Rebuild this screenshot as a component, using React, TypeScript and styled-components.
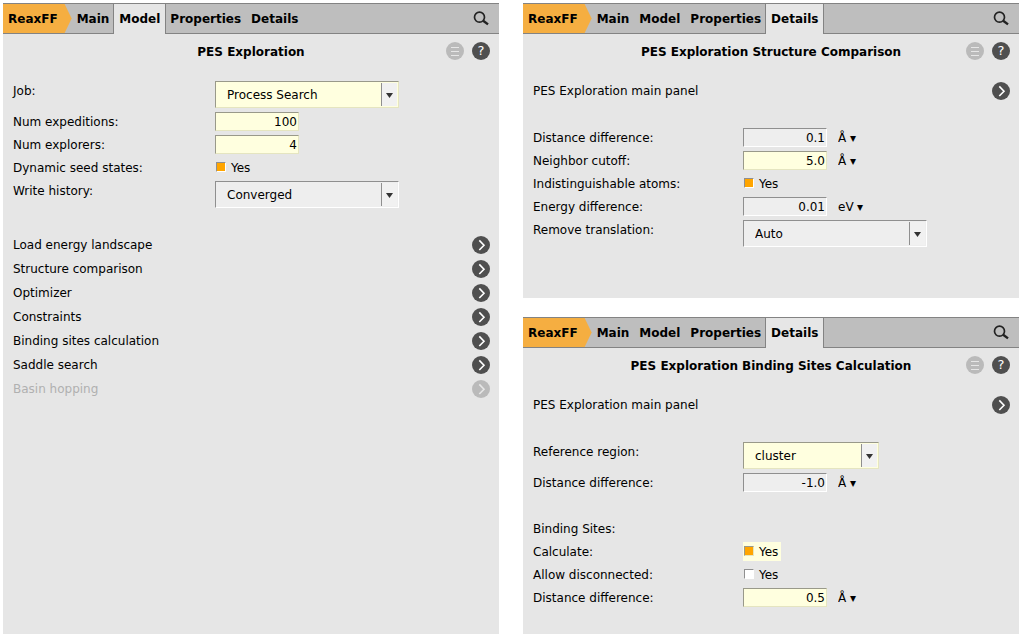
import React, { useId } from "react";
import styled, { createGlobalStyle, css } from "styled-components";

const GlobalStyle = createGlobalStyle`
  *, *::before, *::after { box-sizing: border-box; }
  body {
    margin: 0;
    background: #fff;
    color: #000;
    font: 12px/23px "DejaVu Sans", sans-serif;
  }
  button, input, select { font: inherit; color: inherit; }
`;

const Page = styled.main`
  display: grid;
  grid-template-columns: 1fr 1fr;
  gap: 24px;
  min-height: 100vh;
  padding: 3px 4px 4px 3px;
`;

const Column = styled.div`
  display: flex;
  flex-direction: column;
  gap: 19px;
`;

const PanelBox = styled.section<{ $grow?: boolean }>`
  flex: ${(p) => (p.$grow ? "1 0 auto" : "none")};
  background: #e6e6e6;
  padding-bottom: ${(p) => (p.$grow ? 0 : 49)}px;
`;

const TabBar = styled.nav`
  display: flex;
  height: 31px;
  background: #bebebe;
  border: solid #838383;
  border-width: 1px 0;
`;

const tabBase = css`
  height: 29px;
  border: 0;
  background: none;
  font-weight: bold;
  line-height: 28px;
  cursor: pointer;
`;

const EngineTab = styled.button`
  ${tabBase}
  padding: 1px 14px 0 5px;
  background: #f5ae41;
  clip-path: polygon(0 0, calc(100% - 7px) 0, 100% 50%, calc(100% - 7px) 100%, 0 100%);
`;

const Tab = styled.button<{ $active: boolean }>`
  ${tabBase}
  padding: 1px 5px 0;
  ${(p) =>
    p.$active &&
    css`
      height: 30px;
      margin: 0 -1px;
      padding-bottom: 1px;
      background: #e6e6e6;
      border: solid #838383;
      border-width: 0 1px;
    `}
`;

const SearchButton = styled.button`
  display: flex;
  align-items: center;
  margin-left: auto;
  padding: 0 10px 0 0;
  border: 0;
  background: none;
`;

const TitleRow = styled.header`
  display: grid;
  grid-template-columns: 1fr auto 1fr;
  align-items: center;
  height: 34px;
  padding: 0 9px;
`;

const Title = styled.h2`
  grid-column: 2;
  margin: 0;
  padding-top: 1px;
  font-size: 12px;
  line-height: 24px;
`;

const TitleTools = styled.div`
  display: flex;
  justify-content: flex-end;
  gap: 8px;
`;

const RoundButton = styled.button<{ $muted?: boolean }>`
  display: flex;
  align-items: center;
  justify-content: center;
  width: 18px;
  height: 18px;
  padding: 0;
  border: 0;
  border-radius: 50%;
  background: ${(p) => (p.$muted ? "#bababa" : "#4f4f4f")};
  color: ${(p) => (p.$muted ? "#e6e6e6" : "#fff")};
  font-size: 13px;
  line-height: 18px;
`;

const Body = styled.div`
  display: flex;
  flex-direction: column;
  gap: 23px;
  padding: 11px 9px 0 10px;
`;

const LinkRow = styled.div<{ $muted?: boolean }>`
  display: flex;
  align-items: center;
  justify-content: space-between;
  height: 24px;
  color: ${(p) => (p.$muted ? "#b0b0b0" : "#000")};
`;

const Row = styled.div<{ $label: number }>`
  display: grid;
  grid-template-columns: ${(p) => p.$label}px 1fr;
  min-height: 23px;
`;

const RowLabel = styled.label`
  padding-top: 1px;
  line-height: 22px;
`;

const Controls = styled.div`
  display: flex;
  align-items: center;
  gap: 11px;
  padding: 2px 0;
`;

const bevel = css<{ $set?: boolean }>`
  border: 1px solid;
  border-color: ${(p) =>
    p.$set ? "#99998a #e5e5c0 #e5e5c0 #99998a" : "#8f8f8f #fff #fff #8f8f8f"};
  background: ${(p) => (p.$set ? "#ffffdf" : "#eee")};
`;

const NumberBox = styled.input<{ $set?: boolean }>`
  ${bevel}
  width: 84px;
  height: 19px;
  padding: 1px 1px 0;
  text-align: right;
`;

const DropDown = styled.div<{ $set?: boolean; $width: number }>`
  ${bevel}
  display: grid;
  grid-template-columns: 1fr 17px;
  width: ${(p) => p.$width}px;
  height: 27px;
`;

const DropDownSelect = styled.select`
  grid-area: 1 / 1 / 2 / 3;
  appearance: none;
  border: 0;
  padding: 1px 11px 0;
  background: none;
`;

const DropDownArrow = styled.span`
  display: flex;
  grid-area: 1 / 2 / 2 / 3;
  align-items: center;
  justify-content: center;
  margin: 1px 1px 1px 0;
  padding-top: 2px;
  border-left: 1px solid #8f8f8f;
  background: #f1f1f1;
  pointer-events: none;
`;

const Unit = styled.label`
  display: flex;
  gap: 3px;
  height: 19px;
  padding-top: 1px;
  line-height: 18px;
`;

const UnitSelect = styled.select`
  appearance: none;
  border: 0;
  padding: 0;
  background: none;
`;

const CheckLabel = styled.label<{ $set?: boolean }>`
  display: flex;
  align-items: flex-start;
  gap: 5px;
  height: 19px;
  padding: 0 3px 0 1px;
  line-height: 20px;
  background: ${(p) => (p.$set ? "#ffffdf" : "transparent")};
`;

const CheckBox = styled.input<{ $set?: boolean }>`
  appearance: none;
  width: 10px;
  height: 10px;
  margin: 4px 0 0;
  border: 1px solid;
  border-color: ${(p) =>
    p.$set ? "#99998a #e5e5c0 #e5e5c0 #99998a" : "#8f8f8f #fff #fff #8f8f8f"};
  background: #fff;
  &:checked { background: #ffa500; }
`;

const SearchIcon = () => (
  <svg width="16" height="16" viewBox="0 0 16 16" fill="none" stroke="#222" aria-hidden="true">
    <circle cx="6.500" cy="6.200" r="5" strokeWidth="1.7" />
    <path d="M10.200 9.700 15 13.400" strokeWidth="2.4" />
  </svg>
);

const ChevronIcon = () => (
  <svg width="18" height="18" viewBox="0 0 18 18" fill="none" stroke="currentColor" strokeWidth="1.6" aria-hidden="true">
    <path d="M7.300 4.400 12 9.200 7.300 14" />
  </svg>
);

const MenuIcon = () => (
  <svg width="18" height="18" viewBox="0 0 18 18" stroke="currentColor" aria-hidden="true">
    <path d="M5 5.500h8M5 9.500h8M5 13.500h8" />
  </svg>
);

const ArrowIcon = () => (
  <svg width="7" height="5" viewBox="0 0 7 5" fill="#333" aria-hidden="true">
    <path d="M0 0h7L3.500 5z" />
  </svg>
);

const TABS = ["Main", "Model", "Properties", "Details"];

type PanelProps = {
  title: string;
  active: string;
  grow?: boolean;
  children: React.ReactNode;
};

function Panel({ title, active, grow, children }: PanelProps) {
  return (
    <PanelBox $grow={grow}>
      <TabBar>
        <EngineTab>ReaxFF</EngineTab>
        {TABS.map((name) => (
          <Tab key={name} $active={name === active}>{name}</Tab>
        ))}
        <SearchButton aria-label="Search"><SearchIcon /></SearchButton>
      </TabBar>
      <TitleRow>
        <Title>{title}</Title>
        <TitleTools>
          <RoundButton $muted aria-label="Menu"><MenuIcon /></RoundButton>
          <RoundButton aria-label="Help">?</RoundButton>
        </TitleTools>
      </TitleRow>
      <Body>{children}</Body>
    </PanelBox>
  );
}

function PanelLink({ text, muted }: { text: string; muted?: boolean }) {
  return (
    <LinkRow $muted={muted}>
      <span>{text}</span>
      <RoundButton $muted={muted} disabled={muted} aria-label={text}><ChevronIcon /></RoundButton>
    </LinkRow>
  );
}

type FieldProps = { label: string; value: string; set?: boolean; col?: number };

function NumberField({ label, value, set, unit, col = 210 }: FieldProps & { unit?: string }) {
  const id = useId();
  return (
    <Row $label={col}>
      <RowLabel htmlFor={id}>{label}</RowLabel>
      <Controls>
        <NumberBox id={id} $set={set} defaultValue={value} />
        {unit && (
          <Unit>
            <UnitSelect aria-label={`${label} unit`}><option>{unit}</option></UnitSelect>
            <span aria-hidden="true">▾</span>
          </Unit>
        )}
      </Controls>
    </Row>
  );
}

function SelectField({ label, value, set, col = 210, width = 184 }: FieldProps & { width?: number }) {
  const id = useId();
  return (
    <Row $label={col}>
      <RowLabel htmlFor={id}>{label}</RowLabel>
      <Controls>
        <DropDown $set={set} $width={width}>
          <DropDownSelect id={id}><option>{value}</option></DropDownSelect>
          <DropDownArrow><ArrowIcon /></DropDownArrow>
        </DropDown>
      </Controls>
    </Row>
  );
}

type CheckProps = { label: string; checked?: boolean; set?: boolean; col?: number };

function CheckField({ label, checked, set, col = 210 }: CheckProps) {
  const id = useId();
  return (
    <Row $label={col}>
      <RowLabel htmlFor={id}>{label}</RowLabel>
      <Controls>
        <CheckLabel $set={set}>
          <CheckBox id={id} type="checkbox" $set={set} defaultChecked={checked} />
          Yes
        </CheckLabel>
      </Controls>
    </Row>
  );
}

export default function App() {
  return (
    <>
      <GlobalStyle />
      <Page>
        <Column>
          <Panel title="PES Exploration" active="Model" grow>
            <div>
              <SelectField label="Job:" value="Process Search" set col={202} />
              <NumberField label="Num expeditions:" value="100" set col={202} />
              <NumberField label="Num explorers:" value="4" set col={202} />
              <CheckField label="Dynamic seed states:" checked col={202} />
              <SelectField label="Write history:" value="Converged" col={202} />
            </div>
            <div>
              <PanelLink text="Load energy landscape" />
              <PanelLink text="Structure comparison" />
              <PanelLink text="Optimizer" />
              <PanelLink text="Constraints" />
              <PanelLink text="Binding sites calculation" />
              <PanelLink text="Saddle search" />
              <PanelLink text="Basin hopping" muted />
            </div>
          </Panel>
        </Column>
        <Column>
          <Panel title="PES Exploration Structure Comparison" active="Details">
            <PanelLink text="PES Exploration main panel" />
            <div>
              <NumberField label="Distance difference:" value="0.1" unit="Å" />
              <NumberField label="Neighbor cutoff:" value="5.0" unit="Å" set />
              <CheckField label="Indistinguishable atoms:" checked />
              <NumberField label="Energy difference:" value="0.01" unit="eV" />
              <SelectField label="Remove translation:" value="Auto" />
            </div>
          </Panel>
          <Panel title="PES Exploration Binding Sites Calculation" active="Details" grow>
            <PanelLink text="PES Exploration main panel" />
            <div>
              <SelectField label="Reference region:" value="cluster" set width={136} />
              <NumberField label="Distance difference:" value="-1.0" unit="Å" />
            </div>
            <div>
              <Row $label={210}><RowLabel as="span">Binding Sites:</RowLabel></Row>
              <CheckField label="Calculate:" checked set />
              <CheckField label="Allow disconnected:" />
              <NumberField label="Distance difference:" value="0.5" unit="Å" set />
            </div>
          </Panel>
        </Column>
      </Page>
    </>
  );
}
